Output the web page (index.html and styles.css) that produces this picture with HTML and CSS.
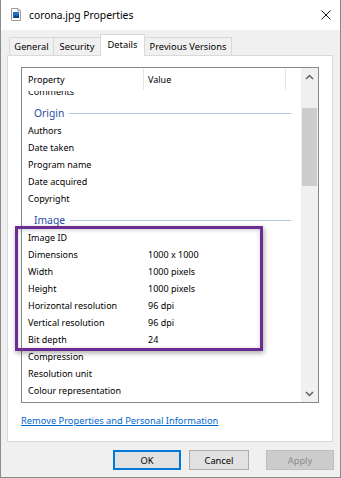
FILE: index.html
```html
<!DOCTYPE html>
<html lang="en">
<head>
    <meta charset="UTF-8">
    <title>corona.jpg Properties</title>
    <link rel="stylesheet" href="styles.css">
</head>
<body>

    <div class="window">

        <div class="titlebar">
            <svg class="file-icon" width="10" height="13" viewBox="0 0 10 13">
                <path d="M0.5 0.5 H7 L9.5 3 V12.5 H0.5 Z" fill="#fff" stroke="#9a9a9a"/>
                <path d="M7 0.5 V3 H9.5" fill="none" stroke="#9a9a9a"/>
                <rect x="2" y="4" width="6" height="6" fill="#1f6fc4"/>
                <path d="M2 10 L4.5 7 L6 8.5 L8 6.5 V10 Z" fill="#0c3e7a"/>
            </svg>
            <span class="title">corona.jpg Properties</span>
            <svg class="close" width="10" height="10" viewBox="0 0 10 10">
                <path d="M0.5 0.5 L9.5 9.5 M9.5 0.5 L0.5 9.5" stroke="#1a1a1a" stroke-width="1"/>
            </svg>
        </div>

        <div class="tabs">
            <div class="tab tab-general">General</div>
            <div class="tab tab-security">Security</div>
            <div class="tab tab-details active">Details</div>
            <div class="tab tab-versions">Previous Versions</div>
        </div>

        <div class="panel">
            <div class="listbox">
                <div class="list-main">
                    <div class="list-head">
                        <div class="head-cell head-prop">Property</div>
                        <div class="head-cell head-value">Value</div>
                    </div>
                    <div class="list-body">
                        <div class="rows">
                            <div class="row"><span class="prop">Comments</span><span class="value"></span></div>
                            <div class="group"><span class="group-name">Origin</span><span class="group-line"></span></div>
                            <div class="row"><span class="prop">Authors</span><span class="value"></span></div>
                            <div class="row"><span class="prop">Date taken</span><span class="value"></span></div>
                            <div class="row"><span class="prop">Program name</span><span class="value"></span></div>
                            <div class="row"><span class="prop">Date acquired</span><span class="value"></span></div>
                            <div class="row"><span class="prop">Copyright</span><span class="value"></span></div>
                            <div class="group"><span class="group-name">Image</span><span class="group-line"></span></div>
                            <div class="row"><span class="prop">Image ID</span><span class="value"></span></div>
                            <div class="row"><span class="prop">Dimensions</span><span class="value">1000 x 1000</span></div>
                            <div class="row"><span class="prop">Width</span><span class="value">1000 pixels</span></div>
                            <div class="row"><span class="prop">Height</span><span class="value">1000 pixels</span></div>
                            <div class="row"><span class="prop">Horizontal resolution</span><span class="value">96 dpi</span></div>
                            <div class="row"><span class="prop">Vertical resolution</span><span class="value">96 dpi</span></div>
                            <div class="row"><span class="prop">Bit depth</span><span class="value">24</span></div>
                            <div class="row"><span class="prop">Compression</span><span class="value"></span></div>
                            <div class="row"><span class="prop">Resolution unit</span><span class="value"></span></div>
                            <div class="row"><span class="prop">Colour representation</span><span class="value"></span></div>
                        </div>
                    </div>
                </div>
                <div class="scrollbar">
                    <div class="scroll-btn">
                        <svg width="9" height="6" viewBox="0 0 9 6"><path d="M1 5 L4.5 1.5 L8 5" fill="none" stroke="#606060" stroke-width="1.5"/></svg>
                    </div>
                    <div class="scroll-track">
                        <div class="scroll-thumb"></div>
                    </div>
                    <div class="scroll-btn">
                        <svg width="9" height="6" viewBox="0 0 9 6"><path d="M1 1 L4.5 4.5 L8 1" fill="none" stroke="#606060" stroke-width="1.5"/></svg>
                    </div>
                </div>
            </div>
            <a class="remove-link" href="#">Remove Properties and Personal Information</a>
        </div>

        <div class="buttons">
            <button class="btn btn-default">OK</button>
            <button class="btn btn-cancel">Cancel</button>
            <button class="btn" disabled>Apply</button>
        </div>

        <!-- annotation box drawn over the list -->
        <div class="highlight"></div>

    </div>

</body>
</html>
```

FILE: styles.css
```css
:root {
    --ui-font: 'Segoe UI', 'Noto Sans', sans-serif;
    --window-bg: #f0f0f0;
    --tab-border: #d9d9d9;
    --list-border: #828790;
    --group-color: #2b4ba6;
    --group-line: #b4c3e6;
}

body {
    margin: 0;
    padding: 0;
    background-color: #fff;
    font-family: var(--ui-font);
    font-size: 9px;
    color: #000;
}

.window {
    position: relative;
    width: 341px;
    height: 478px;
    box-sizing: border-box;
    border: 1px solid #8c8c8c;
    border-top: none;
    background-color: var(--window-bg);
    display: flex;
    flex-direction: column;
    overflow: hidden;
}

/* title bar */
.titlebar {
    height: 30px;
    flex: none;
    background-color: #fff;
    display: flex;
    align-items: center;
    padding: 0 9px 0 10px;
}

.file-icon {
    flex: none;
    margin-top: -1px;
}

.title {
    margin-left: 8px;
    font-size: 10.3px;
    flex: 1;
}

.close {
    flex: none;
}

/* tabs */
.tabs {
    display: flex;
    align-items: flex-end;
    height: 21px;
    margin-top: 4px;
    padding-left: 8px;
    flex: none;
}

.tab {
    height: 18px;
    box-sizing: border-box;
    border: 1px solid var(--tab-border);
    border-bottom: none;
    background-color: var(--window-bg);
    font-size: 9.3px;
    line-height: 17px;
    text-align: center;
    margin-left: -1px;
}

.tab-general { width: 45px; margin-left: 0; }
.tab-security { width: 48px; }
.tab-details { width: 45px; }
.tab-versions { width: 88px; }

.tab.active {
    position: relative;
    z-index: 1;
    height: 22px;
    margin-bottom: -1px;
    background-color: #fff;
    line-height: 19px;
}

/* tab page */
.panel {
    flex: none;
    height: 387px;
    box-sizing: border-box;
    margin: 0 7px 0 6px;
    border: 1px solid var(--tab-border);
    background-color: #fff;
    padding: 11px 13px 0 13px;
}

.listbox {
    height: 336px;
    box-sizing: border-box;
    border: 1px solid var(--list-border);
    display: flex;
}

.list-main {
    flex: 1;
    display: flex;
    flex-direction: column;
    min-width: 0;
}

.list-head {
    height: 23px;
    flex: none;
    display: flex;
    padding: 1px 0;
    box-sizing: border-box;
    position: relative;
    z-index: 1;
    background-color: #fff;
}

.head-cell {
    box-sizing: border-box;
    border-right: 1px solid #e5e5e5;
    line-height: 21px;
}

.head-prop {
    width: 122px;
    padding-left: 6px;
}

.head-value {
    width: 142px;
    padding-left: 4px;
}

.list-body {
    flex: 1;
    overflow: hidden;
}

/* list is scrolled a little past the first row */
.rows {
    margin-top: -8px;
}

.row {
    height: 17px;
    line-height: 17px;
    display: flex;
    white-space: nowrap;
}

.prop {
    width: 120px;
    flex: none;
    padding-left: 6px;
}

.group {
    height: 22px;
    display: flex;
    align-items: center;
    padding-top: 4px;
    box-sizing: border-box;
}

.group-name {
    padding-left: 12px;
    font-size: 10.3px;
    color: var(--group-color);
}

.group-line {
    flex: 1;
    height: 1px;
    background-color: var(--group-line);
    margin: 0 10px 0 5px;
}

/* scrollbar */
.scrollbar {
    width: 17px;
    flex: none;
    background-color: var(--window-bg);
    display: flex;
    flex-direction: column;
}

.scroll-btn {
    height: 17px;
    flex: none;
    display: flex;
    align-items: center;
    justify-content: center;
}

.scroll-track {
    flex: 1;
    padding-top: 23px;
}

.scroll-thumb {
    height: 78px;
    margin: 0 1px;
    background-color: #cdcdcd;
}

.remove-link {
    display: inline-block;
    margin-top: 11px;
    line-height: 14px;
    font-size: 9.3px;
    color: #0066cc;
    text-decoration: underline;
}

/* dialog buttons */
.buttons {
    display: flex;
    justify-content: flex-end;
    gap: 8px;
    margin-top: 8px;
    padding-right: 6px;
}

.btn {
    width: 68px;
    height: 20px;
    box-sizing: border-box;
    border: 1px solid #adadad;
    background-color: #e1e1e1;
    font-family: var(--ui-font);
    font-size: 9.3px;
    color: #000;
    padding: 0;
}

.btn-cancel {
    width: 60px;
    margin-right: 9px;
}

.btn-default {
    border-color: #0078d7;
    box-shadow: inset 0 0 0 1px #0078d7;
}

.btn:disabled {
    background-color: #cccccc;
    border-color: #bfbfbf;
    color: #8a8a8a;
}

/* purple annotation over the image rows */
.highlight {
    position: absolute;
    left: 14px;
    top: 226px;
    width: 248px;
    height: 125px;
    box-sizing: border-box;
    border: 3px solid #6b2c93;
    box-shadow: 1px 2px 5px rgba(0,0,0,0.35), inset 0 1px 4px rgba(0,0,0,0.2);
    pointer-events: none;
}
```
